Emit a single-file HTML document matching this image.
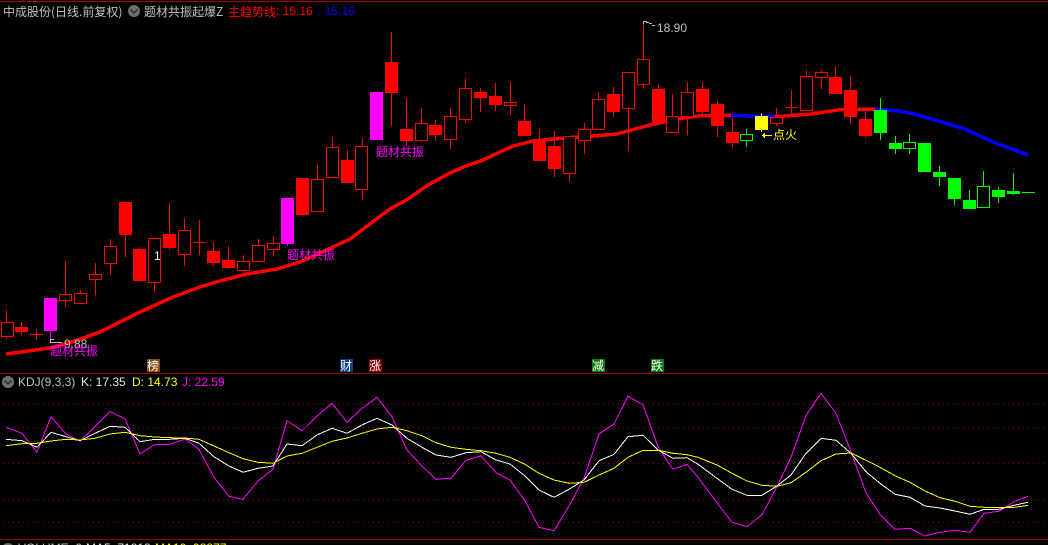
<!DOCTYPE html>
<html><head><meta charset="utf-8"><style>
html,body{margin:0;padding:0;background:#000;width:1048px;height:545px;overflow:hidden}
svg{display:block;position:absolute;left:0;top:0}
text{font-family:"Liberation Sans","WenQuanYi Zen Hei",sans-serif;font-size:12px}
.c{font-family:"WenQuanYi Zen Hei","Noto Sans CJK SC",sans-serif}
</style></head><body>
<svg width="1048" height="545" viewBox="0 0 1048 545" shape-rendering="crispEdges">
<rect width="1048" height="545" fill="#000"/>
<g fill="#a00000">
<rect x="0" y="1" width="1048" height="1"/><rect x="23" y="0" width="1" height="2"/>
<rect x="0" y="373" width="1048" height="1"/><rect x="0" y="539" width="1048" height="1"/>
</g>
<g stroke="#a80000" stroke-width="1" stroke-dasharray="1 4" fill="none">
<path d="M3 404.5H1048M3 427.5H1048M3 463.5H1048M3 499.5H1048M3 522.5H1048"/>
</g>
<!-- trend -->
<g fill="none" stroke-width="3.5" stroke-linejoin="round">
<polyline stroke="#ff0000" points="6,354 50,348 75,341 100,332 120,322 140,312 173,297 200,287 220,281 247,274 277,269 300,262 333,247 350,239 375,220 390,209 408,199 428,185 450,173 466,166 483,160 500,152 513,146 533,141 563,138 593,136 617,134 650,125 683,118 698,116 731,115"/>
<polyline stroke="#0000ff" points="731,115 748,116 775,116"/>
<polyline stroke="#ff0000" points="775,116 785,116 811,114 838,110 858,109 875,109"/>
<polyline stroke="#0000ff" points="875,109 898,111 915,114 931,119 948,124 965,129 982,137 998,144 1028,155"/>
</g>
<!-- red wicks -->
<path fill="#ff0000" d="M21 322h1V335h-1zM36 329h1V340h-1zM125 234h1V257h-1zM139 247h1V250h-1zM169 203h1V250h-1zM213 242h1V266h-1zM228 246h1V269h-1zM302 214h1V217h-1zM347 150h1V160h-1zM391 32h1V126h-1zM406 98h1V146h-1zM435 120h1V141h-1zM480 88h1V112h-1zM495 83h1V111h-1zM524 104h1V121h-1zM539 129h1V140h-1zM554 131h1V177h-1zM613 87h1V117h-1zM658 84h1V89h-1zM702 82h1V114h-1zM717 101h1V137h-1zM732 118h1V147h-1zM835 66h1V77h-1zM850 76h1V124h-1zM865 111h1V138h-1zM199 220h1V255h-1zM791 90h1V114h-1z
M6 310h1V339h-1zM65 261h1V307h-1zM80 290h1V293h-1zM95 263h1V295h-1zM110 239h1V275h-1zM154 282h1V291h-1zM184 218h1V266h-1zM243 255h1V275h-1zM258 239h1V245h-1zM273 236h1V256h-1zM317 165h1V179h-1zM332 137h1V147h-1zM362 138h1V200h-1zM421 108h1V123h-1zM450 108h1V149h-1zM465 78h1V123h-1zM510 82h1V115h-1zM569 173h1V182h-1zM584 123h1V154h-1zM598 92h1V99h-1zM628 108h1V151h-1zM643 23h1V89h-1zM672 94h1V116h-1zM687 82h1V135h-1zM776 108h1V126h-1zM806 70h1V76h-1zM821 70h1V89h-1z"/>
<!-- red filled -->
<path fill="#ff0000" d="M15 327h13v5h-13zM119 202h13v33h-13zM133 249h13v32h-13zM163 234h13v14h-13zM207 251h13v12h-13zM222 260h13v8h-13zM296 178h13v37h-13zM341 160h13v23h-13zM385 62h13v31h-13zM400 129h13v12h-13zM429 125h13v10h-13zM474 92h13v6h-13zM489 96h13v9h-13zM518 121h13v15h-13zM533 140h13v21h-13zM548 146h13v23h-13zM607 94h13v18h-13zM652 89h13v35h-13zM696 89h13v23h-13zM711 104h13v22h-13zM726 132h13v11h-13zM829 77h13v17h-13zM844 90h13v27h-13zM859 119h13v17h-13zM30 334h13v1h-13zM193 242h13v1h-13zM785 107h13v1h-13z"/>
<!-- red hollow outer -->
<path fill="#ff0000" d="M1 322h13v15h-13zM59 294h13v7h-13zM74 293h13v11h-13zM89 274h13v6h-13zM104 246h13v18h-13zM148 238h13v45h-13zM178 230h13v25h-13zM237 261h13v10h-13zM252 245h13v17h-13zM267 243h13v7h-13zM311 179h13v33h-13zM326 147h13v31h-13zM355 146h13v44h-13zM415 123h13v18h-13zM444 116h13v24h-13zM459 88h13v32h-13zM504 102h13v4h-13zM563 136h13v38h-13zM578 129h13v12h-13zM592 99h13v31h-13zM622 72h13v37h-13zM637 59h13v26h-13zM666 116h13v17h-13zM681 92h13v25h-13zM770 117h13v7h-13zM800 76h13v35h-13zM815 72h13v6h-13z"/>
<!-- red hollow inner -->
<path fill="#000000" d="M2 323h11v13h-11zM60 295h11v5h-11zM75 294h11v9h-11zM90 275h11v4h-11zM105 247h11v16h-11zM149 239h11v43h-11zM179 231h11v23h-11zM238 262h11v8h-11zM253 246h11v15h-11zM268 244h11v5h-11zM312 180h11v31h-11zM327 148h11v29h-11zM356 147h11v42h-11zM416 124h11v16h-11zM445 117h11v22h-11zM460 89h11v30h-11zM505 103h11v2h-11zM564 137h11v36h-11zM579 130h11v10h-11zM593 100h11v29h-11zM623 73h11v35h-11zM638 60h11v24h-11zM667 117h11v15h-11zM682 93h11v23h-11zM771 118h11v5h-11zM801 77h11v33h-11zM816 73h11v4h-11z"/>
<!-- magenta -->
<path fill="#ff00ff" d="M50 331h1V343h-1zM287 244h1V246h-1zM44 298h13v33h-13zM281 198h13v46h-13zM370 92h13v48h-13z"/>
<!-- yellow -->
<path fill="#ffff00" d="M761 113h1V132h-1zM755 116h13v14h-13z"/>
<!-- green -->
<path fill="#00ff00" d="M880 98h1V140h-1zM895 136h1V154h-1zM939 166h1V186h-1zM954 198h1V205h-1zM969 190h1V200h-1zM998 187h1V203h-1zM1013 173h1V195h-1zM746 129h1V147h-1zM909 134h1V154h-1zM983 171h1V186h-1z"/>
<path fill="#00ff00" d="M874 110h13v23h-13zM889 143h13v6h-13zM918 143h13v29h-13zM933 172h13v5h-13zM948 178h13v21h-13zM963 200h13v9h-13zM992 190h13v7h-13zM1007 191h13v3h-13zM1022 192h13v1h-13zM740 134h13v7h-13zM903 142h13v7h-13zM977 186h13v22h-13z"/>
<path fill="#000000" d="M741 135h11v5h-11zM904 143h11v5h-11zM978 187h11v20h-11z"/>
<!-- KDJ lines -->
<g fill="none" stroke-width="1">
<polyline stroke="#ff00ff" points="6,427.3 22,433.3 37,452.3 51,416.7 66,434 80,441 95,426.7 110,411.7 125,418.7 140,454 155,444.3 170,444.3 185,439 199,449.3 214,477.3 229,496.3 243,499.3 258,481 273,469.3 287,420.7 302,430.7 317,416 332,403.3 347,422.3 362,408.3 377,397.3 392,416.7 407,450 422,466 436,479.3 451,478.3 466,460.3 481,455.7 496,472.7 510,480 525,500.7 539,527.3 554,530.7 569,506 584,478.3 599,434 614,424 628,396.3 643,404.7 658,446.7 673,469.3 687,464.3 698,477.3 717,502.7 732,522.3 747,526.7 762,514.7 777,486.7 791,457.3 806,415.7 821,393.3 836,413.3 851,451.7 866,492.7 880,514.3 895,529.3 910,528.3 925,536 940,532.3 955,530.3 970,532.3 984,513.3 999,511.3 1014,501.7 1028,496.3"/>
<polyline stroke="#ffffff" points="6,439.3 22,440.7 37,447.3 51,432.3 66,436.7 80,440.7 95,433.3 110,426.3 125,427.3 140,441.7 155,439.3 170,439.3 185,438.3 199,443.3 214,456.7 229,466 243,472.3 258,468.3 273,466 287,444 302,445.7 317,435 332,428.3 347,433.3 362,425 377,418.3 392,425 407,438.3 422,447.3 436,455 451,457.3 466,452.7 481,451.7 496,460 510,464 525,476 539,490 554,497.3 569,489.3 584,480 599,460.7 614,454.3 628,436.7 643,435.3 658,450 673,458.3 687,457.7 698,464.3 717,478.3 732,489.3 747,495.3 762,495.3 777,486 791,475 806,453.3 821,438.3 836,440.3 851,453.3 866,471.7 880,483.3 895,494.3 910,497.3 925,506 940,508 955,511 970,514.3 984,509.3 999,509.3 1014,505.3 1028,502.3"/>
<polyline stroke="#ffff00" points="6,445.7 22,443.7 37,443.3 51,441 66,439.3 80,440 95,438.3 110,434 125,432.3 140,435.7 155,437 170,437.7 185,438 199,439.3 214,446 229,452.7 243,458.7 258,462.3 273,463.3 287,456 302,453.3 317,447.3 332,441.3 347,438 362,433.3 377,429 392,427.3 407,430.7 422,435.7 436,442.7 451,447.3 466,449.3 481,450.7 496,453.3 510,457.3 525,464.3 539,473.3 554,480 569,483.3 584,482.3 599,475 614,468.3 628,457.3 643,450.3 658,450.3 673,453.3 687,454.7 698,457.3 717,465 732,473.3 747,481 762,485.3 777,486.3 791,482.7 806,472.3 821,460.7 836,454 851,453 866,460.3 880,467.3 895,475.7 910,482.3 925,491 940,497.7 955,501.3 970,506.3 984,507.3 999,507.3 1014,507.3 1028,505.3"/>
</g>
<!-- arrows -->
<path fill="#c0c0c0" d="M50 342h12v1h-12zM50 339h4v1h-4zM50 339h1v4h-1zM643 21h4v1h-4zM643 21h1v3h-1zM646 22h3v1h-3zM649 23h3v1h-3zM652 25h3v1h-3z"/>
<path fill="#ffff00" d="M762 135h10v1h-10zM763 134h1v3h-1zM764 133h1v5h-1z"/>
<g shape-rendering="auto">
<circle cx="134" cy="11" r="6" fill="#6e6e6e"/><path d="M130.500 9.500L134 13L137.500 9.500" fill="none" stroke="#2c2c2c" stroke-width="1.500"/>
<circle cx="8" cy="382" r="6" fill="#6e6e6e"/><path d="M4.500 380.500L8 384L11.500 380.500" fill="none" stroke="#2c2c2c" stroke-width="1.500"/>
<circle cx="8" cy="549" r="6" fill="#6e6e6e"/>
</g>
<!-- markers -->
<rect x="147" y="359" width="13" height="13" fill="#7f4a10"/>
<rect x="340" y="359" width="13" height="13" fill="#0b3f7f"/>
<rect x="369" y="359" width="13" height="13" fill="#8b0000"/>
<rect x="592" y="359" width="13" height="13" fill="#0a7a0a"/>
<rect x="651" y="359" width="13" height="13" fill="#0a7a0a"/>
<g fill="#ffffff">
<text class="c" x="147" y="370">榜</text>
<text class="c" x="340" y="370">财</text>
<text class="c" x="369" y="370">涨</text>
<text class="c" x="592" y="370">减</text>
<text class="c" x="651" y="370">跌</text>
</g>
<!-- header -->
<text class="c" x="3" y="16" fill="#c0c0c0">中成股份(日线.前复权)</text>
<text class="c" x="144" y="16" fill="#c0c0c0">题材共振起爆Z</text>
<text class="c" x="228" y="16" fill="#ff0000">主趋势线</text>
<text x="276" y="15" fill="#ff0000">: 15.16</text>
<text x="318" y="15" fill="#0000ff">: 15.16</text>
<!-- labels -->
<text x="64" y="348" fill="#c0c0c0">9.88</text>
<text x="657" y="32" fill="#c0c0c0">18.90</text>
<text x="154" y="260" fill="#ffffff">1</text>
<text class="c" x="50" y="355" fill="#ff00ff">题材共振</text>
<text class="c" x="287" y="259" fill="#ff00ff">题材共振</text>
<text class="c" x="376" y="156" fill="#ff00ff">题材共振</text>
<text class="c" x="773" y="139" fill="#ffff00">点火</text>
<!-- KDJ header -->
<text x="18" y="386" fill="#c0c0c0">KDJ(9,3,3)</text>
<text x="81" y="386" fill="#e6e6e6">K: 17.35</text>
<text x="132" y="386" fill="#ffff00">D: 14.73</text>
<text x="182" y="386" fill="#ff00ff">J: 22.59</text>
<!-- volume header -->
<text x="18" y="552" fill="#c0c0c0">VOLUME: 0</text>
<text x="86" y="552" fill="#e6e6e6">MA5: 71818</text>
<text x="155" y="552" fill="#ffff00">MA10: 98877</text>
</svg>
</body></html>
